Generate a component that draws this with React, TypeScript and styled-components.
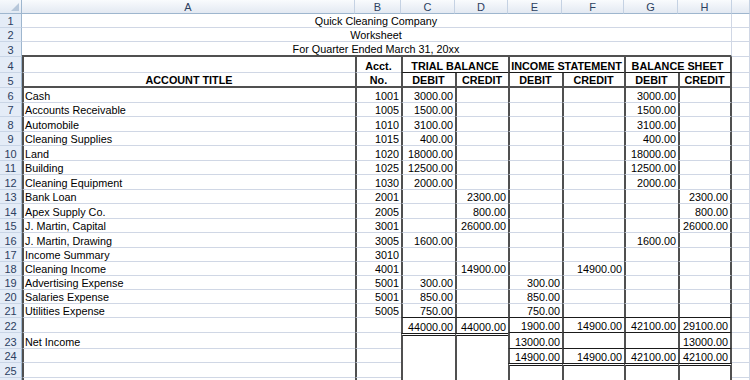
import React from 'react';
import styled, { createGlobalStyle } from 'styled-components';

const GlobalStyle = createGlobalStyle`
  html, body { margin: 0; padding: 0; background: #ffffff; overflow: hidden; }
  body { font-family: "Liberation Sans", Arial, sans-serif; }
`;

type Edge = 'none' | 'grid' | 'thin' | 'thick' | 'double';
type Align = 'left' | 'right' | 'center';

const EDGE: Record<Edge, string> = {
  none: 'none',
  grid: '1px solid #d0d7e5',
  thin: '1px solid #1a1a1a',
  thick: '2px solid #505050',
  double: '3px double #1a1a1a',
};

const ROW_HEIGHTS = [14, 14, 14, 15, 16, 15, 15, 14, 15, 14, 15, 14, 15, 14, 15, 14, 15, 14, 14, 14, 14, 14, 15, 16, 14, 15, 14];
const COL_WIDTHS = [22, 333, 46, 54, 53, 54, 62, 54, 54];
const COL_LETTERS = ['A', 'B', 'C', 'D', 'E', 'F', 'G', 'H', ''];
const ROW_COUNT = 26;

const Sheet = styled.div`
  display: grid;
  grid-template-columns: ${COL_WIDTHS.map((w) => `${w}px`).join(' ')} 1fr;
  grid-template-rows: ${ROW_HEIGHTS.map((h) => `${h}px`).join(' ')};
  width: 750px;
  height: 380px;
  overflow: hidden;
  font-family: "Liberation Sans", Arial, sans-serif;
  font-size: 10.8px;
  color: #000;
`;

const Corner = styled.div`
  box-sizing: border-box;
  position: relative;
  background: linear-gradient(#f6f9fc, #e2e9f3);
  border-right: 1px solid #9eb6ce;
  border-bottom: 1px solid #9eb6ce;
  svg {
    position: absolute;
    right: 2px;
    bottom: 2px;
  }
`;

const ColHead = styled.div`
  box-sizing: border-box;
  display: flex;
  align-items: center;
  justify-content: center;
  background: linear-gradient(#f9fbfd, #e3e9f2);
  border-right: 1px solid #c5d2e3;
  border-bottom: 1px solid #9eb6ce;
  color: #2c4060;
  font-size: 11px;
  line-height: 12px;
`;

const RowHead = styled.div`
  box-sizing: border-box;
  display: flex;
  align-items: flex-end;
  justify-content: center;
  background: #e4ecf7;
  border-right: 1px solid #9eb6ce;
  border-bottom: 1px solid #c9d5e6;
  color: #2c4060;
  font-size: 11px;
  line-height: 12px;
`;

interface CellProps {
  $span: number;
  $align: Align;
  $bold: boolean;
  $l: Edge;
  $t: Edge;
  $r: Edge;
  $b: Edge;
}

const Cell = styled.div<CellProps>`
  box-sizing: border-box;
  grid-column: span ${(p) => p.$span};
  display: flex;
  align-items: flex-end;
  justify-content: ${(p) => (p.$align === 'right' ? 'flex-end' : p.$align === 'center' ? 'center' : 'flex-start')};
  padding: 0 2px 0 1px;
  line-height: 12px;
  font-weight: ${(p) => (p.$bold ? 700 : 400)};
  white-space: nowrap;
  background: #ffffff;
  border-left: ${(p) => EDGE[p.$l]};
  border-top: ${(p) => EDGE[p.$t]};
  border-right: ${(p) => EDGE[p.$r]};
  border-bottom: ${(p) => EDGE[p.$b]};
`;

interface Spec {
  c: number;
  span?: number;
  text?: string;
  align?: Align;
  bold?: boolean;
}

const num = (c: number, text: string): Spec => ({ c, text, align: 'right' });

const dataRow = (title: string, acct: string, vals: Record<number, string>): Spec[] => {
  const out: Spec[] = [];
  if (title) out.push({ c: 1, text: title });
  if (acct) out.push(num(2, acct));
  Object.keys(vals).forEach((k) => out.push(num(Number(k), vals[Number(k)])));
  return out;
};

const head = (c: number, text: string, span = 1): Spec => ({ c, span, text, align: 'center', bold: true });

const ROWS: Record<number, Spec[]> = {
  1: [{ c: 1, span: 8, text: 'Quick Cleaning Company', align: 'center' }],
  2: [{ c: 1, span: 8, text: 'Worksheet', align: 'center' }],
  3: [{ c: 1, span: 8, text: 'For Quarter Ended March 31, 20xx', align: 'center' }],
  4: [head(2, 'Acct.'), head(3, 'TRIAL BALANCE', 2), head(5, 'INCOME STATEMENT', 2), head(7, 'BALANCE SHEET', 2)],
  5: [
    head(1, 'ACCOUNT TITLE'),
    head(2, 'No.'),
    head(3, 'DEBIT'),
    head(4, 'CREDIT'),
    head(5, 'DEBIT'),
    head(6, 'CREDIT'),
    head(7, 'DEBIT'),
    head(8, 'CREDIT'),
  ],
  6: dataRow('Cash', '1001', { 3: '3000.00', 7: '3000.00' }),
  7: dataRow('Accounts Receivable', '1005', { 3: '1500.00', 7: '1500.00' }),
  8: dataRow('Automobile', '1010', { 3: '3100.00', 7: '3100.00' }),
  9: dataRow('Cleaning Supplies', '1015', { 3: '400.00', 7: '400.00' }),
  10: dataRow('Land', '1020', { 3: '18000.00', 7: '18000.00' }),
  11: dataRow('Building', '1025', { 3: '12500.00', 7: '12500.00' }),
  12: dataRow('Cleaning Equipment', '1030', { 3: '2000.00', 7: '2000.00' }),
  13: dataRow('Bank Loan', '2001', { 4: '2300.00', 8: '2300.00' }),
  14: dataRow('Apex Supply Co.', '2005', { 4: '800.00', 8: '800.00' }),
  15: dataRow('J. Martin, Capital', '3001', { 4: '26000.00', 8: '26000.00' }),
  16: dataRow('J. Martin, Drawing', '3005', { 3: '1600.00', 7: '1600.00' }),
  17: dataRow('Income Summary', '3010', {}),
  18: dataRow('Cleaning Income', '4001', { 4: '14900.00', 6: '14900.00' }),
  19: dataRow('Advertising Expense', '5001', { 3: '300.00', 5: '300.00' }),
  20: dataRow('Salaries Expense', '5001', { 3: '850.00', 5: '850.00' }),
  21: dataRow('Utilities Expense', '5005', { 3: '750.00', 5: '750.00' }),
  22: dataRow('', '', { 3: '44000.00', 4: '44000.00', 5: '1900.00', 6: '14900.00', 7: '42100.00', 8: '29100.00' }),
  23: dataRow('Net Income', '', { 5: '13000.00', 8: '13000.00' }),
  24: dataRow('', '', { 5: '14900.00', 6: '14900.00', 7: '42100.00', 8: '42100.00' }),
};

const isTrial = (c: number) => c === 3 || c === 4;
const isStatement = (c: number) => c >= 5 && c <= 8;

function bottomEdge(r: number, c: number): Edge {
  if (c > 8) return 'grid';
  if (r === 3) return 'thick';
  if (r === 4) return c >= 3 ? 'thin' : 'grid';
  if (r === 5) return 'thick';
  if (r === 21) return c >= 3 ? 'thin' : 'grid';
  if (r === 22) return isTrial(c) ? 'none' : isStatement(c) ? 'thin' : 'grid';
  if (r === 23) return isTrial(c) ? 'none' : isStatement(c) ? 'thin' : 'grid';
  if (r === 24) return c >= 3 ? 'none' : 'grid';
  if (r >= 25) return c >= 3 ? 'none' : 'grid';
  return 'grid';
}

function topEdge(r: number, c: number): Edge {
  if (r === 23 && isTrial(c)) return 'double';
  if (r === 25 && isStatement(c)) return 'double';
  return 'none';
}

function buildRow(r: number) {
  const specs = ROWS[r] || [];
  const byCol = new Map<number, Spec>();
  specs.forEach((s) => byCol.set(s.c, s));
  const cells: React.ReactNode[] = [];
  let c = 1;
  while (c <= 9) {
    const s = byCol.get(c) || { c };
    const span = s.span || 1;
    const end = c + span - 1;
    const inTable = r >= 4 && c <= 8;
    const left: Edge = inTable ? 'thick' : 'none';
    let right: Edge = 'grid';
    if (inTable) right = end === 8 ? 'thick' : 'none';
    cells.push(
      <Cell
        key={`${r}-${c}`}
        $span={span}
        $align={s.align || 'left'}
        $bold={!!s.bold}
        $l={left}
        $t={topEdge(r, c)}
        $r={right}
        $b={bottomEdge(r, c)}
      >
        {s.text}
      </Cell>
    );
    c = end + 1;
  }
  return cells;
}

export default function App() {
  const rowNumbers = Array.from({ length: ROW_COUNT }, (_, i) => i + 1);
  return (
    <>
      <GlobalStyle />
      <Sheet>
        <Corner>
          <svg width="8" height="8" viewBox="0 0 8 8">
            <polygon points="8,0 8,8 0,8" fill="#b7c7da" />
          </svg>
        </Corner>
        {COL_LETTERS.map((l, i) => (
          <ColHead key={`h${i}`}>{l}</ColHead>
        ))}
        {rowNumbers.map((r) => (
          <React.Fragment key={`r${r}`}>
            <RowHead>{r <= 25 ? r : ''}</RowHead>
            {buildRow(r)}
          </React.Fragment>
        ))}
      </Sheet>
    </>
  );
}
